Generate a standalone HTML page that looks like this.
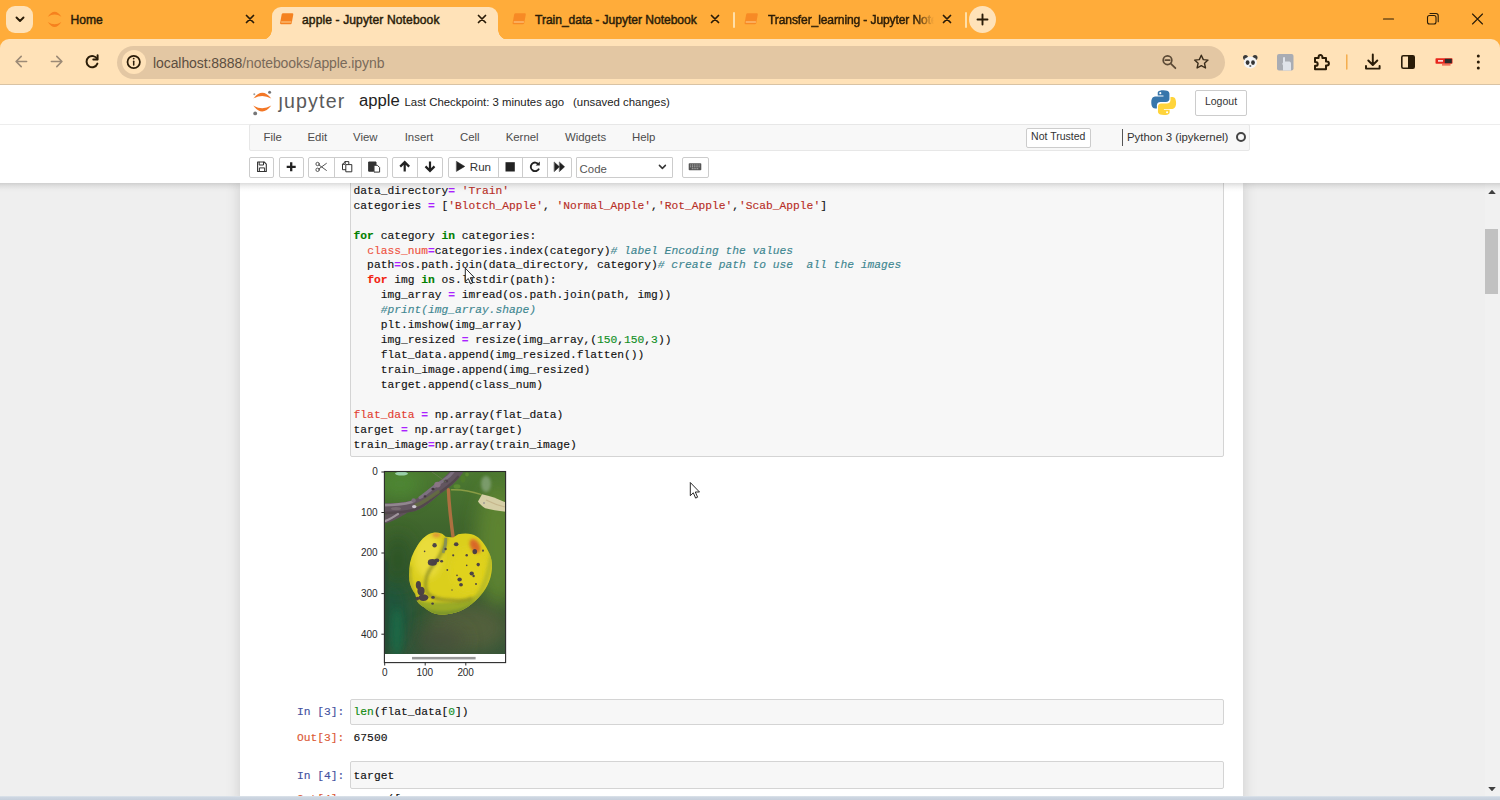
<!DOCTYPE html>
<html>
<head>
<meta charset="utf-8">
<title>apple - Jupyter Notebook</title>
<style>
*{box-sizing:border-box;margin:0;padding:0}
html,body{width:1500px;height:800px;overflow:hidden;background:#fff;font-family:"Liberation Sans",sans-serif;}
body{position:relative}
.abs{position:absolute}
/* ---------- browser chrome ---------- */
#tabstrip{left:0;top:0;width:1500px;height:54px;background:#FFAC3A}
#toolbar{left:0;top:39px;width:1500px;height:46px;background:#FFE2B8;border-top-left-radius:9px;border-top-right-radius:9px}
#tbline{left:0;top:84px;width:1500px;height:1px;background:#D9C3A4}
#pill{left:117px;top:45.5px;width:1107.5px;height:33.5px;border-radius:17px;background:#E3C7A3}
#infoc{left:122px;top:50px;width:24px;height:24px;border-radius:12px;background:#FFE2B8}
#url{left:153px;top:53.7px;font-size:14px;line-height:18px;color:#5c4e40;letter-spacing:-0.08px;white-space:nowrap}
#url span{color:#7a6a5a}
#tabsearch{left:6px;top:5.5px;width:27px;height:27.5px;border-radius:9px;background:#FFE2B8}
.tabtxt{top:12.2px;font-size:12.1px;line-height:16px;color:#2a1c08;white-space:nowrap;font-weight:400;-webkit-text-stroke:0.45px #2a1c08}
#acttab{left:272px;top:7px;width:226px;height:33px;background:#FFE2B8;border-radius:9px 9px 0 0}
.tabcurve{width:10px;height:10px;top:30px;background:radial-gradient(circle at var(--cx) 0,rgba(255,226,184,0) 9.5px,#FFE2B8 10px)}
.sep{top:12px;width:2px;height:16px;background:#FFDfA8;border-radius:1px}
#newtab{left:969px;top:6px;width:27px;height:27px;border-radius:14px;background:#FFE2B8}
/* ---------- jupyter header ---------- */
#jhead{left:0;top:85px;width:1500px;height:98px;background:#fff;z-index:5}
#jshadow{left:0;top:183px;width:1500px;height:9px;z-index:5;background:linear-gradient(180deg,rgba(80,80,80,0.20),rgba(80,80,80,0.09) 35%,rgba(80,80,80,0.025) 70%,rgba(80,80,80,0))}
#jname{left:359px;top:91px;font-size:16.65px;line-height:20px;color:#222;white-space:nowrap}
#jchk{left:404.5px;top:95px;font-size:11.4px;line-height:14px;color:#222;white-space:nowrap}
#jsave{left:573px;top:95px;font-size:11.4px;line-height:14px;color:#222;white-space:nowrap}
#jtext{left:278.5px;top:85.9px;font-size:19.6px;line-height:30px;color:#5a5a5a;white-space:nowrap;letter-spacing:1.15px}
#logout{left:1195px;top:89.5px;width:52px;height:26px;border:1px solid #ccc;border-radius:2px;background:#fff;font-size:10.5px;line-height:21.6px;text-align:center;color:#333}
#menubar{left:249.3px;top:124.3px;width:1001.2px;height:27px;background:#f8f8f8;border:1px solid #e7e7e7;border-radius:2px}
.mi{top:129.8px;font-size:11.4px;line-height:14px;color:#4c4c4c;white-space:nowrap}
#nottrust{left:1026px;top:127.5px;width:64.5px;height:20px;border:1px solid #ccc;border-radius:2px;background:#fff;font-size:10.5px;line-height:15.8px;text-align:center;color:#333}
#ksep{left:1122px;top:129px;width:1px;height:17px;background:#555}
#kname{left:1127px;top:129.6px;font-size:11.4px;line-height:14px;color:#333;white-space:nowrap}
#kcirc{left:1235.8px;top:132px;width:10.4px;height:10.4px;border-radius:6px;border:2px solid #444}
.tbg{top:156.5px;height:21px;border:1px solid #ccc;border-radius:2px;background:#fff}
.tbd{top:157.5px;width:1px;height:19px;background:#ccc}
.ic{position:absolute}
/* ---------- notebook ---------- */
#site{left:0;top:183px;width:1485px;height:614px;background:#efefef;overflow:hidden}
#nbc{left:240px;top:183px;width:1003px;height:620px;background:#fff;box-shadow:0 0 12px 1px rgba(87,87,87,0.2)}
#sbar{left:1485px;top:183px;width:15px;height:614px;background:#f1f1f1}
#sthumb{left:1485.2px;top:228.7px;width:13.2px;height:65.6px;background:#c1c1c1}
#botstrip{left:0;top:796.2px;width:1500px;height:4px;background:linear-gradient(180deg,#dfe5ec 0,#ced7e2 30%,#c6d0dc 100%)}
.inarea{left:350px;width:874px;background:#f7f7f7;border:1px solid #d4d4d4;border-radius:2px}
pre,.mono{font-family:"Liberation Mono",monospace;font-size:11.275px;line-height:14.935px;color:#111;white-space:pre;-webkit-text-stroke:0.14px currentColor}
.k{color:#008000;font-weight:bold}
.o{color:#AA22FF;font-weight:bold}
.s{color:#B72E26}
.n{color:#0f8f1f}
.c{color:#3E8690;font-style:italic}
.b{color:#108a10}
.r1{color:#EE5240}
.r2{color:#F2200E;font-weight:bold}
.r3{color:#E23E32}
.pin{color:#4452A0}
.pout{color:#DB5A34}
.tick{font-size:10px;line-height:10px;color:#2a2a2a;white-space:nowrap;letter-spacing:-0.12px}
</style>
</head>
<body>
<!-- ======= browser chrome ======= -->
<div id="tabstrip" class="abs"></div>
<div id="toolbar" class="abs"></div>
<div id="tbline" class="abs"></div>
<div id="tabsearch" class="abs"></div>
<div id="acttab" class="abs"></div>
<div class="abs tabcurve" style="left:262px;--cx:0px"></div>
<div class="abs tabcurve" style="left:498px;--cx:10px"></div>
<div id="pill" class="abs"></div>
<div id="infoc" class="abs"></div>
<div id="url" class="abs">localhost:8888<span>/notebooks/apple.ipynb</span></div>

<div class="abs tabtxt" style="left:70.5px">Home</div>
<div class="abs tabtxt" style="left:302px;letter-spacing:0.1px">apple - Jupyter Notebook</div>
<div class="abs tabtxt" style="left:535px;letter-spacing:-0.04px">Train_data - Jupyter Notebook</div>
<div class="abs tabtxt" style="left:768px;letter-spacing:-0.13px;width:166px;overflow:hidden;-webkit-mask-image:linear-gradient(90deg,#000 148px,transparent 166px)">Transfer_learning - Jupyter Notebook</div>
<div class="abs sep" style="left:733px"></div>
<div class="abs sep" style="left:965px"></div>
<div id="newtab" class="abs"></div>

<svg class="abs" style="left:0;top:0" width="1500" height="85" viewBox="0 0 1500 85" fill="none" stroke-linecap="round" stroke-linejoin="round">
  <!-- tab search chevron -->
  <path d="M16.5 17.5 L20 21 L23.5 17.5" stroke="#2a1c08" stroke-width="1.9"/>
  <!-- home favicon: jupyter arcs -->
  <path d="M47.8 16.8 Q54.6 6.8 61.4 16.8 Q54.6 12.4 47.8 16.8Z" fill="#F6811E" stroke="none"/>
  <path d="M47.8 22 Q54.6 32 61.4 22 Q54.6 26.4 47.8 22Z" fill="#F6811E" stroke="none"/>
  <!-- tab close X -->
  <g stroke="#2a1c08" stroke-width="1.75">
    <path d="M246.5 15.5 l7 7 m0 -7 l-7 7"/>
    <path d="M478.5 15.5 l7 7 m0 -7 l-7 7"/>
    <path d="M711.5 15.5 l7 7 m0 -7 l-7 7"/>
    <path d="M943.5 15.5 l7 7 m0 -7 l-7 7"/>
  </g>
  <!-- notebook favicons -->
  <g fill="#F58220" stroke="none">
    <path id="bk" d="M283.2 13.2 h9 q1.3 0 1.1 1.2 l-1.6 8.8 q-0.2 1 -1.3 1 h-9.2 q-1.3 0 -1.1 -1.3 l1.6 -8.6 q0.2 -1.1 1.5 -1.1z"/>
    <use href="#bk" x="232.5" opacity="0.8"/>
    <use href="#bk" x="464.5" opacity="0.8"/>
  </g>
  <g stroke="#FFD9A0" stroke-width="0.9">
    <path d="M281.6 22 h9.4"/><path d="M514.1 22 h9.4"/><path d="M746.1 22 h9.4"/>
  </g>
  <!-- new tab plus -->
  <path d="M977.5 19.5 h10 M982.5 14.5 v10" stroke="#2a1c08" stroke-width="1.9"/>
  <!-- window controls -->
  <path d="M1383.5 19 h10" stroke="#2a1c08" stroke-width="1.1"/>
  <rect x="1427.5" y="15.5" width="8.5" height="8.5" rx="2" stroke="#2a1c08" stroke-width="1.1"/>
  <path d="M1430 13.5 h6 q2.2 0 2.2 2.2 v6" stroke="#2a1c08" stroke-width="1.1"/>
  <path d="M1472.5 14 l10 10 m0 -10 l-10 10" stroke="#2a1c08" stroke-width="1.1"/>
  <!-- back / forward / reload -->
  <path d="M26.6 61.5 h-10 M21.2 56.4 l-5.1 5.1 l5.1 5.1" stroke="#9c8a76" stroke-width="1.6"/>
  <path d="M51.4 61.5 h10 M56.8 56.4 l5.1 5.1 l-5.1 5.1" stroke="#9c8a76" stroke-width="1.6"/>
  <path d="M97.2 59.2 A5.6 5.6 0 1 0 97.4 63.6" stroke="#2a1c08" stroke-width="1.95"/>
  <path d="M97.6 55.2 v4.3 h-4.3" stroke="#2a1c08" stroke-width="1.95"/>
  <!-- info icon -->
  <circle cx="133.7" cy="62" r="6.2" stroke="#2a1c08" stroke-width="1.75"/>
  <path d="M133.7 61.3 v3.6" stroke="#2a1c08" stroke-width="1.5"/>
  <circle cx="133.7" cy="58.6" r="0.9" fill="#2a1c08" stroke="none"/>
  <!-- zoom icon -->
  <circle cx="1167.5" cy="60.2" r="4.3" stroke="#5c4a36" stroke-width="1.75"/>
  <path d="M1170.8 63.6 l4.6 4.6 M1165.4 60.2 h4.2" stroke="#5c4a36" stroke-width="1.75"/>
  <!-- star -->
  <path d="M1201.3 55.2 l2 4.4 4.7 0.5 -3.5 3.2 1 4.7 -4.2 -2.4 -4.2 2.4 1 -4.7 -3.5 -3.2 4.7 -0.5z" stroke="#3a2c1a" stroke-width="1.4"/>
  <!-- panda -->
  <g stroke="none">
    <circle cx="1245.5" cy="57.5" r="2.5" fill="#3a3a3a"/><circle cx="1255" cy="57.5" r="2.5" fill="#3a3a3a"/>
    <ellipse cx="1250.3" cy="62.5" rx="6.6" ry="6" fill="#f4f4f4"/>
    <ellipse cx="1247.6" cy="62.6" rx="1.9" ry="2.3" fill="#333"/><ellipse cx="1253" cy="62.6" rx="1.9" ry="2.3" fill="#333"/>
    <ellipse cx="1250.3" cy="66" rx="1.1" ry="0.8" fill="#333"/>
  </g>
  <!-- grey avatar -->
  <rect x="1277" y="54" width="16.5" height="16.5" rx="2" fill="#a9acb3" stroke="none"/>
  <path d="M1283 70.5 v-5 q-1.5 -2 0 -3 v-5 q1.3 -1.2 2 0 v4 h4.5 q1.5 0.4 1.5 2 v7z" fill="#dfe3ea" stroke="none"/>
  <!-- puzzle -->
  <path d="M1315 58 h3.6 v-1 a1.9 1.9 0 0 1 3.8 0 v1 h3.6 v3.6 h1 a1.9 1.9 0 0 1 0 3.8 h-1 v3.8 h-11 v-3.4 h0.8 a1.9 1.9 0 0 0 0 -3.8 h-0.8z" stroke="#2a1c08" stroke-width="2"/>
  <!-- separator -->
  <path d="M1346.8 55 v14" stroke="#F2A53C" stroke-width="1.3"/>
  <!-- download -->
  <path d="M1372.8 54.5 v10 M1368.3 60.5 l4.5 4.5 4.5 -4.5 M1366 66 v2.6 h13.6 v-2.6" stroke="#2a1c08" stroke-width="1.95"/>
  <!-- side panel -->
  <rect x="1401.8" y="55.8" width="12.4" height="12.4" rx="1.5" stroke="#2a1c08" stroke-width="1.6"/>
  <rect x="1408" y="55.8" width="6.2" height="12.4" fill="#2a1c08" stroke="none"/>
  <!-- red logo -->
  <rect x="1435.5" y="58.2" width="17" height="5.6" rx="0.8" fill="#E8261C" stroke="none"/>
  <rect x="1444.8" y="58.8" width="7" height="4.4" fill="#2a2a2a" stroke="none"/>
  <rect x="1438" y="60.2" width="5" height="1.4" fill="#fff" stroke="none"/>
  <rect x="1442" y="64.4" width="8.5" height="1" fill="#E8261C" stroke="none"/>
  <!-- menu dots -->
  <g fill="#2a1c08" stroke="none"><circle cx="1478.3" cy="56" r="1.5"/><circle cx="1478.3" cy="62" r="1.5"/><circle cx="1478.3" cy="68" r="1.5"/></g>
</svg>

<!-- ======= notebook area (under header) ======= -->
<div id="site" class="abs"></div>
<div id="nbc" class="abs"></div>
<div id="sbar" class="abs"></div>
<div id="sthumb" class="abs"></div>

<div class="abs inarea" style="top:170px;height:286.5px"></div>
<pre class="abs" style="left:353.6px;top:183.8px">data_directory<span class="o">=</span> <span class="s">'Train'</span>
categories <span class="o">=</span> [<span class="s">'Blotch_Apple'</span>, <span class="s">'Normal_Apple'</span>,<span class="s">'Rot_Apple'</span>,<span class="s">'Scab_Apple'</span>]

<span class="k">for</span> category <span class="k">in</span> categories:
  <span class="r1">class_num</span><span class="o">=</span>categories.index(category)<span class="c"># label Encoding the values</span>
  path<span class="o">=</span>os.path.join(data_directory, category)<span class="c"># create path to use  all the images</span>
  <span class="r2">for</span> img <span class="k">in</span> os.listdir(path):
    img_array <span class="o">=</span> imread(os.path.join(path, img))
    <span class="c">#print(img_array.shape)</span>
    plt.imshow(img_array)
    img_resized <span class="o">=</span> resize(img_array,(<span class="n">150</span>,<span class="n">150</span>,<span class="n">3</span>))
    flat_data.append(img_resized.flatten())
    train_image.append(img_resized)
    target.append(class_num)

<span class="r3">flat_data</span> <span class="o">=</span> np.array(flat_data)
target <span class="o">=</span> np.array(target)
train_image<span class="o">=</span>np.array(train_image)</pre>

<svg class="abs" style="left:1485px;top:183px" width="15" height="614" viewBox="1485 183 15 614"><path d="M1488.2 194 l3.8 -4.2 l3.8 4.2z M1488.2 787 l3.8 4.2 l3.8 -4.2z" fill="#404040"/></svg>
<!-- matplotlib output -->
<svg class="abs" style="left:355px;top:462px" width="170" height="225" viewBox="355 462 170 225">
  <defs>
    <clipPath id="imclip"><rect x="384.4" y="471.5" width="121.2" height="182.6"/></clipPath>
    <clipPath id="apclip"><path d="M434.6 532.5 C428 533 421.5 539 417.7 545.2 C412.5 553 409.6 561 409.3 568.8 C409 573 409 577 409.3 580.6 C410.2 586 412.6 590.5 415.2 594.1 L417 600.9 C418.8 603.8 421.5 605.8 424.5 607.6 C427.5 610.4 431 612.4 434.6 613.5 C438 614.6 441.4 614.8 444.7 614.4 C450 614 455.2 613 460 611 C465.6 608.6 470.6 605.2 475 600.9 C479 597.4 482.5 593.4 485.3 589 C488.2 584.4 490.2 579.3 491.2 573.9 C491.9 570.6 492.2 567.2 492 563.8 C491.6 559 490.2 554.4 487.8 550.2 C485.8 546.2 483.3 542.5 480.2 539.3 C477.8 536.8 474.9 535 471.7 534.2 C467.3 533.2 462.7 533.4 458.2 534.2 L453.2 537.6 L445.6 536.8 C444.4 535.3 443 534.1 441.4 533.4 C439.2 532.6 436.9 532.4 434.6 532.5Z"/></clipPath>
    <filter id="b1" x="-20%" y="-20%" width="140%" height="140%"><feGaussianBlur stdDeviation="0.65"/></filter>
    <filter id="b15" x="-30%" y="-30%" width="160%" height="160%"><feGaussianBlur stdDeviation="1.4"/></filter>
    <filter id="b3" x="-40%" y="-40%" width="180%" height="180%"><feGaussianBlur stdDeviation="3.2"/></filter>
    <filter id="b6" x="-60%" y="-60%" width="220%" height="220%"><feGaussianBlur stdDeviation="9"/></filter>
    <linearGradient id="bg" x1="0" y1="0" x2="0" y2="1">
      <stop offset="0" stop-color="#4c7931"/><stop offset="0.3" stop-color="#40662d"/><stop offset="0.65" stop-color="#38592f"/><stop offset="1" stop-color="#355538"/>
    </linearGradient>
  </defs>
  <g clip-path="url(#imclip)">
    <rect x="384" y="471" width="122" height="184" fill="url(#bg)"/>
    <ellipse cx="498" cy="545" rx="22" ry="64" fill="#5f8531" filter="url(#b6)" opacity="0.95"/>
    <ellipse cx="400" cy="484" rx="22" ry="14" fill="#4f8a34" filter="url(#b6)" opacity="0.9"/>
    <ellipse cx="392" cy="614" rx="20" ry="40" fill="#1f5640" filter="url(#b6)" opacity="0.85"/>
    <ellipse cx="398" cy="560" rx="14" ry="26" fill="#2a5228" filter="url(#b6)" opacity="0.8"/>
    <ellipse cx="468" cy="628" rx="40" ry="24" fill="#54603e" filter="url(#b6)" opacity="0.95"/>
    <ellipse cx="440" cy="640" rx="26" ry="14" fill="#46503a" filter="url(#b6)" opacity="0.8"/>
    <ellipse cx="397" cy="632" rx="6" ry="24" fill="#1b6a46" filter="url(#b3)" opacity="0.85"/>
    <rect x="383" y="560" width="5" height="95" fill="#284a30" filter="url(#b15)" opacity="0.8"/>
    <ellipse cx="486" cy="484" rx="5" ry="8" fill="#86a47a" filter="url(#b15)" opacity="0.8"/>
    <ellipse cx="401.5" cy="473.6" rx="6.5" ry="2" fill="#a6dcbc" filter="url(#b1)" opacity="0.85"/>
    <!-- branch -->
    <g filter="url(#b1)">
      <path d="M383 519.5 C390 519 396 514.5 403 511" fill="none" stroke="#5f525a" stroke-width="8" stroke-linecap="round"/>
      <path d="M382 509 C394 509 404 508 414 505.6 C424 502.6 430 494.6 438 488.6 C446 483.6 452 478.6 458 470" fill="none" stroke="#62555e" stroke-width="11" stroke-linecap="round"/>
      <path d="M382 513 C394 513 404 512.4 414 510 C424 507 431 499 439 493 C446 488 452 484 458 477" fill="none" stroke="#4e424a" stroke-width="2.6" stroke-linecap="round" opacity="0.75"/>
      <path d="M382 505.2 C394 505.2 404 504.2 412 502" fill="none" stroke="#91868f" stroke-width="2.8" stroke-linecap="round"/>
      <path d="M420 497.6 C428 492.6 434 485.6 442 481.6 C448 477.6 452 473.6 455 469.6" fill="none" stroke="#85788a" stroke-width="3" stroke-linecap="round" opacity="0.8"/>
      <path d="M416 505 C424 503 430 497 438 492" fill="none" stroke="#66733c" stroke-width="3.6" stroke-linecap="round" opacity="0.75"/>
      <ellipse cx="414.2" cy="506.6" rx="2.2" ry="1.7" fill="#cfc8d2"/>
      <ellipse cx="413.6" cy="500.4" rx="2.2" ry="2.2" fill="#7a6c7a"/>
      <ellipse cx="437.5" cy="484.6" rx="3.2" ry="2.8" fill="#8a7484"/>
      <ellipse cx="433" cy="489" rx="1.6" ry="1.3" fill="#3f343c"/>
      <ellipse cx="425" cy="496.4" rx="1.4" ry="1.1" fill="#45393f"/>
      <ellipse cx="446" cy="481" rx="2.4" ry="1.6" fill="#4a3e46" opacity="0.8"/>
      <ellipse cx="396" cy="508.6" rx="5" ry="1.6" fill="#7d7076" opacity="0.8"/>
      <path d="M383 521.5 C389 520.5 393 517 398 514" fill="none" stroke="#aaa0a8" stroke-width="2.2" stroke-linecap="round" opacity="0.85"/>
      <!-- small lichen / leaves near junction -->
      <ellipse cx="457" cy="486.5" rx="3.4" ry="2.2" fill="#5c8a30"/>
      <ellipse cx="463" cy="479" rx="2.4" ry="3.4" fill="#4f7c2c"/>
      <ellipse cx="467" cy="474.6" rx="1.8" ry="2" fill="#5c8a30"/>
      <path d="M432 472 C438 476 442 479 446 482" fill="none" stroke="#6e7d56" stroke-width="1" opacity="0.7"/>
      <!-- twig + leaf -->
      <path d="M451.5 489.7 C460 489.4 470 490.6 480.8 494.4" fill="none" stroke="#8a9c44" stroke-width="1.5" stroke-linecap="round"/>
      <path d="M478 501.5 L482 494.2 C490 495.6 498 499 505.8 502.6 L505.8 511.8 C498 511 491 509.6 485.3 508.3 C482 506.4 479.6 504 478 501.5Z" fill="#d6cfa6"/>
      <path d="M486 500 C492 503 499 505.6 505 507" fill="none" stroke="#c2b086" stroke-width="1.2" opacity="0.8"/>
      <ellipse cx="484" cy="503" rx="0.8" ry="0.8" fill="#7a7a8a"/>
      <!-- stem -->
      <path d="M448.4 489.7 C448.8 500 450 512 451.2 522 C451.8 528 452.6 533 453.2 538" fill="none" stroke="#ad7040" stroke-width="3.4" stroke-linecap="round"/>
    </g>
    <!-- apple -->
    <g filter="url(#b1)">
      <g clip-path="url(#apclip)">
        <rect x="405" y="528" width="92" height="92" fill="#dbcf1f"/>
        <ellipse cx="428" cy="556" rx="14" ry="22" fill="#e9dc3a" filter="url(#b3)"/>
        <ellipse cx="468" cy="570" rx="18" ry="22" fill="#e0d21c" filter="url(#b3)"/>
        <path d="M405 594 C420 604 440 603 460 601 C474 599 484 593 494 583 L494 622 L405 622Z" fill="#9aab28" filter="url(#b15)"/>
        <path d="M414 602 C430 614 452 614 472 604 L472 622 L414 622Z" fill="#7d962c" filter="url(#b15)"/>
        <path d="M493 548 C490 566 488 584 474 602" fill="none" stroke="#b4b828" stroke-width="5" filter="url(#b15)" opacity="0.8"/>
        <path d="M446.5 537 C444.5 548 441 556 434 564 C427 572 424 580 426 590 C428 597 436 599 446 600 C456 601 464 602 472 598" fill="none" stroke="#8f9022" stroke-width="3" filter="url(#b15)" opacity="0.9"/>
        <path d="M446 538 C446 544 445 548 443 553" fill="none" stroke="#7c8a64" stroke-width="3" filter="url(#b1)" opacity="0.8"/>
        <ellipse cx="475" cy="546" rx="4.6" ry="7.4" fill="#d9642a" transform="rotate(-28 475 546)" filter="url(#b15)" opacity="0.95"/>
        <ellipse cx="436.5" cy="535" rx="4" ry="2.2" fill="#e08a3c" filter="url(#b15)" opacity="0.85"/>
        <path d="M410 566 C409 580 413 594 420 604" fill="none" stroke="#9a9a28" stroke-width="2.4" filter="url(#b15)" opacity="0.7"/>
      </g>
      <g fill="#423848" opacity="0.92" filter="url(#b1)">
        <ellipse cx="434.6" cy="545.2" rx="2.2" ry="2.3"/>
        <ellipse cx="456.2" cy="544.3" rx="2.3" ry="2"/>
        <ellipse cx="445.6" cy="549" rx="1.2" ry="1.2"/>
        <ellipse cx="474.8" cy="551.6" rx="2.3" ry="2.7"/>
        <ellipse cx="483" cy="550.6" rx="1" ry="1.2"/>
        <ellipse cx="432.4" cy="562.4" rx="4.6" ry="3.3"/>
        <ellipse cx="437" cy="560.4" rx="2.4" ry="1.8"/>
        <ellipse cx="441.6" cy="561.2" rx="1.5" ry="1.3"/>
        <ellipse cx="453.2" cy="555.3" rx="1.1" ry="1.1"/>
        <ellipse cx="466.7" cy="555.3" rx="1.2" ry="1.2"/>
        <ellipse cx="478.2" cy="564.6" rx="1.7" ry="1.8"/>
        <ellipse cx="466.7" cy="565.4" rx="0.8" ry="0.8"/>
        <ellipse cx="447.3" cy="570" rx="0.9" ry="0.9"/>
        <ellipse cx="471.7" cy="573.6" rx="2.2" ry="2"/>
        <ellipse cx="473.6" cy="576" rx="1.2" ry="1.2"/>
        <ellipse cx="459.6" cy="579.6" rx="2.2" ry="2"/>
        <ellipse cx="461" cy="584.8" rx="1.9" ry="1.7"/>
        <ellipse cx="476" cy="584" rx="1" ry="1"/>
        <ellipse cx="418.4" cy="585" rx="2.6" ry="4"/>
        <ellipse cx="421" cy="591" rx="3.6" ry="4.2"/>
        <ellipse cx="423.4" cy="597.6" rx="5" ry="3.4"/>
        <ellipse cx="417.4" cy="598.6" rx="1.8" ry="1.8"/>
        <ellipse cx="433" cy="597.4" rx="1.8" ry="1.3"/>
        <ellipse cx="432.6" cy="603.6" rx="1.3" ry="1.2"/>
        <ellipse cx="424.6" cy="551.4" rx="0.8" ry="0.8"/>
        <ellipse cx="457" cy="575.4" rx="0.8" ry="0.8"/>
        <ellipse cx="452" cy="590" rx="0.7" ry="0.7"/>
      </g>
    </g>
  </g>
  <!-- caption strip -->
  <rect x="384.4" y="654" width="121.2" height="8.5" fill="#fff"/>
  <rect x="412" y="656.9" width="63.6" height="2.5" fill="#444" opacity="0.55" filter="url(#b1)"/>
  <!-- axes -->
  <rect x="384.4" y="471.5" width="121.2" height="191.1" fill="none" stroke="#2a2a2a" stroke-width="1.1"/>
  <g stroke="#2a2a2a" stroke-width="1">
    <path d="M384.4 472 h-3 M384.4 512.5 h-3 M384.4 553 h-3 M384.4 593.6 h-3 M384.4 634.2 h-3"/>
    <path d="M384.7 662.5 v3 M425.2 662.5 v3 M465.8 662.5 v3"/>
  </g>
</svg>
<div class="abs tick" style="left:340px;width:37.6px;text-align:right;top:467.4px">0</div>
<div class="abs tick" style="left:340px;width:37.4px;text-align:right;top:507.7px">100</div>
<div class="abs tick" style="left:340px;width:37.4px;text-align:right;top:548.3px">200</div>
<div class="abs tick" style="left:340px;width:37.4px;text-align:right;top:588.9px">300</div>
<div class="abs tick" style="left:340px;width:37.4px;text-align:right;top:629.5px">400</div>
<div class="abs tick" style="left:364.7px;width:40px;text-align:center;top:667.7px">0</div>
<div class="abs tick" style="left:404.7px;width:40px;text-align:center;top:667.7px">100</div>
<div class="abs tick" style="left:445.6px;width:40px;text-align:center;top:667.7px">200</div>

<!-- In [3] -->
<div class="abs inarea" style="top:699px;height:25.5px"></div>
<pre class="abs pin" style="left:297px;top:704.9px">In [3]:</pre>
<pre class="abs" style="left:353.6px;top:704.9px"><span class="b">len</span>(flat_data[<span class="n">0</span>])</pre>
<pre class="abs pout" style="left:297px;top:731px">Out[3]:</pre>
<pre class="abs" style="left:353.6px;top:731.3px">67500</pre>
<!-- In [4] -->
<div class="abs inarea" style="top:761px;height:27.6px"></div>
<pre class="abs pin" style="left:297px;top:768.6px">In [4]:</pre>
<pre class="abs" style="left:353.6px;top:768.6px">target</pre>
<pre class="abs pout" style="left:297px;top:792px">Out[4]:</pre>
<pre class="abs" style="left:353.6px;top:792.3px">array([</pre>


<!-- ======= jupyter header ======= -->
<div id="jhead" class="abs"></div><div id="jshadow" class="abs"></div>

<div style="position:absolute;left:0;top:0;width:1500px;height:200px;z-index:6">
<svg class="abs" style="left:250px;top:88px" width="26" height="30" viewBox="0 0 26 30">
  <path d="M3.3 10.6 Q12.2 -1.2 21.3 10.6 Q12.2 5.4 3.3 10.6Z" fill="#F37726"/>
  <path d="M3.3 17.6 Q12.2 29.4 21.3 17.6 Q12.2 22.8 3.3 17.6Z" fill="#F37726"/>
  <circle cx="19.6" cy="4.2" r="1.5" fill="#767677"/>
  <circle cx="5.2" cy="25.4" r="1.9" fill="#767677"/>
  <circle cx="4.3" cy="6.2" r="1" fill="#9E9E9E"/>
</svg>
<div id="jtext" class="abs">&#567;upyter</div>
<div id="jname" class="abs">apple</div>
<div id="jchk" class="abs">Last Checkpoint: 3 minutes ago</div>
<div id="jsave" class="abs">(unsaved changes)</div>
<svg class="abs" style="left:1149.6px;top:89.4px" width="27.6" height="27.6" viewBox="0 0 26 26">
  <path d="M12.6 1.2 c-5.6 0 -5.3 2.4 -5.3 2.4 v2.6 h5.4 v0.8 H5.1 S1.2 6.6 1.2 12.6 s3.3 5.7 3.3 5.7 h2 v-2.8 s-0.1 -3.3 3.3 -3.3 h5.4 s3.1 0.1 3.1 -3 V4.5 s0.5 -3.3 -5.7 -3.3z" fill="#3776AB"/>
  <circle cx="9.7" cy="3.9" r="1" fill="#fff"/>
  <path d="M13.2 24.6 c5.6 0 5.3 -2.4 5.3 -2.4 v-2.6 h-5.4 v-0.8 h7.6 s3.9 0.4 3.9 -5.6 s-3.3 -5.7 -3.3 -5.7 h-2 v2.8 s0.1 3.3 -3.3 3.3 h-5.4 s-3.1 -0.1 -3.1 3 v4.7 s-0.5 3.3 5.7 3.3z" fill="#FFD43B"/>
  <circle cx="16.1" cy="21.9" r="1" fill="#fff"/>
</svg>
<div id="logout" class="abs">Logout</div>
<div class="abs" style="left:0;top:124px;width:1500px;height:1px;background:#ededed"></div>
<div id="menubar" class="abs"></div>
<div class="abs mi" style="left:263.5px">File</div>
<div class="abs mi" style="left:307.5px">Edit</div>
<div class="abs mi" style="left:353px">View</div>
<div class="abs mi" style="left:404.7px">Insert</div>
<div class="abs mi" style="left:460px">Cell</div>
<div class="abs mi" style="left:505.7px">Kernel</div>
<div class="abs mi" style="left:565px">Widgets</div>
<div class="abs mi" style="left:632px">Help</div>
<div id="nottrust" class="abs">Not Trusted</div>
<div id="ksep" class="abs"></div>
<div id="kname" class="abs">Python 3 (ipykernel)</div>
<div id="kcirc" class="abs"></div>
<!-- toolbar button groups -->
<div class="abs tbg" style="left:249.2px;width:25px"></div>
<div class="abs tbg" style="left:279px;width:24.5px"></div>
<div class="abs tbg" style="left:308px;width:79.5px"></div>
<div class="abs tbd" style="left:334px"></div><div class="abs tbd" style="left:360.5px"></div>
<div class="abs tbg" style="left:391.5px;width:51px"></div>
<div class="abs tbd" style="left:417px"></div>
<div class="abs tbg" style="left:448px;width:124px"></div>
<div class="abs tbd" style="left:498px"></div><div class="abs tbd" style="left:522px"></div><div class="abs tbd" style="left:547px"></div>
<div class="abs tbg" style="left:576px;width:97px;border-radius:1px"></div>
<div class="abs tbg" style="left:682px;width:26.5px"></div>
<div class="abs" style="left:469.8px;top:160.3px;font-size:11.6px;line-height:14px;color:#333">Run</div>
<div class="abs" style="left:579.6px;top:161.8px;font-size:11.4px;line-height:14px;color:#555">Code</div>
<svg class="abs" style="left:240px;top:149.3px" width="480" height="35" viewBox="240 150 480 35" fill="none" stroke-linecap="round" stroke-linejoin="round">
  <!-- save (floppy) -->
  <path d="M257.6 163 h6.6 l2.1 2.1 v7.4 h-8.7z" stroke="#333" stroke-width="1.1"/>
  <path d="M259.2 163.2 v2.8 h4.3 v-2.8 M259.4 172.3 v-3.4 h5.2 v3.4" stroke="#333" stroke-width="1"/>
  <!-- plus -->
  <path d="M286.7 167.8 h9 M291.2 163.3 v9" stroke="#222" stroke-width="2.3" stroke-linecap="butt"/>
  <!-- scissors -->
  <g stroke="#555" stroke-width="1">
    <circle cx="317.6" cy="165" r="1.7"/><circle cx="317.6" cy="170.8" r="1.7"/>
    <path d="M319 166 l7.4 5.4 M319 169.8 l7.4 -5.4"/>
  </g>
  <!-- copy -->
  <g stroke="#333" stroke-width="1">
    <path d="M345.2 162.6 h3.6 v3 M345.2 162.6 l-2.7 2.7 v5.4 h3.2 M345.2 162.6 v2.7 h-2.7"/>
    <path d="M346.2 165.6 h5.6 v7.2 h-5.6z" fill="#fff"/>
  </g>
  <!-- paste -->
  <path d="M369 163 h7 v3 h-2.6 v6.2 h-4.4z" fill="#333" stroke="#333" stroke-width="1"/>
  <path d="M374.4 166.3 h3 l2.2 2.2 v4.6 h-5.2z" fill="#fff" stroke="#333" stroke-width="1"/>
  <!-- arrow up / down -->
  <path d="M404.7 172.4 v-8 M400.2 167.6 l4.5 -4.5 l4.5 4.5" stroke="#222" stroke-width="2.2" stroke-linecap="butt" stroke-linejoin="miter"/>
  <path d="M430 162.6 v8 M425.5 167.4 l4.5 4.5 l4.5 -4.5" stroke="#222" stroke-width="2.2" stroke-linecap="butt" stroke-linejoin="miter"/>
  <!-- run triangle -->
  <path d="M456.7 162.6 l8 4.8 l-8 4.8z" fill="#222" stroke="#222" stroke-width="0.6"/>
  <!-- stop -->
  <rect x="505.5" y="163.2" width="9.3" height="9.3" fill="#222"/>
  <!-- restart -->
  <path d="M538.6 165.4 A4.3 4.3 0 1 0 539 169.6" stroke="#222" stroke-width="1.9" stroke-linecap="butt"/>
  <path d="M539.8 162.4 v4.2 h-4.2z" fill="#222" stroke="none"/>
  <!-- fast forward -->
  <path d="M554.4 163.2 l5 4.6 l-5 4.6z M559.6 163.2 l5 4.6 l-5 4.6z" fill="#222" stroke="#222" stroke-width="0.5"/>
  <!-- select chevron -->
  <path d="M659.4 166.4 l3 3 l3 -3" stroke="#333" stroke-width="1.5"/>
  <!-- keyboard -->
  <rect x="688.7" y="164.3" width="12.6" height="7" rx="0.8" fill="#555"/>
  <path d="M690.2 166 h9.6 M690.2 167.8 h9.6 M691.8 169.7 h6.4" stroke="#d8d8d8" stroke-width="0.8" stroke-dasharray="1 0.8" stroke-linecap="butt"/>
</svg>
</div>



<svg class="abs" style="left:0;top:0;z-index:8" width="1500" height="800" viewBox="0 0 1500 800">
  <path id="cur" d="M0 0 v13.2 l3 -2.9 l2.3 5.3 l2 -0.9 l-2.3 -5.2 h4.2z" fill="#fff" stroke="#111" stroke-width="0.9" stroke-linejoin="round" transform="translate(465.3,268.2)"/>
  <use href="#cur" x="225" y="214.3"/>
</svg>
<div id="botstrip" class="abs" style="z-index:9"></div>
</body>
</html>
